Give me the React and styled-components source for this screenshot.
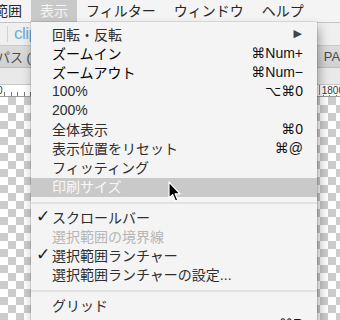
import styled, { createGlobalStyle } from "styled-components";

const Global = createGlobalStyle`
html, body {
  margin: 0;
  padding: 0;
  background: #fff;
}
body {
  font-family: "Liberation Sans", "Noto Sans CJK JP", "DejaVu Sans", sans-serif;
}
`

const Screen = styled.div`
position: relative;
width: 340px;
height: 320px;
overflow: hidden;
display: flex;
flex-direction: column;
background: #fff;
`

const MenuBar = styled.div`
height: 22px;
flex: none;
display: flex;
align-items: stretch;
background: #f4f4f4;
border-bottom: 1px solid #c4c4c4;
font-size: 14px;
color: #262626;
`

const BarItem = styled.div`
display: flex;
align-items: center;
padding: 0 9px 2px;
white-space: nowrap;
background: ${p => p.active ? "#c9c9c9" : "transparent"};
color: ${p => p.active ? "#f4f4f4" : "#262626"};
margin-left: ${p => p.first ? "-43px" : "0"};
`

const Toolbar = styled.div`
height: 22px;
flex: none;
display: flex;
align-items: center;
background: #efefef;
border-bottom: 1px solid #c9c9c9;
`

const Divider = styled.div`
width: 1px;
height: 16px;
margin-left: 7px;
background: #d2d2d2;
`

const ClipLabel = styled.span`
margin-left: 6px;
font-family: "Liberation Sans", sans-serif;
font-size: 17px;
color: #6aaee6;
letter-spacing: -0.5px;
`

const TabBar = styled.div`
height: 21px;
flex: none;
display: flex;
align-items: center;
justify-content: space-between;
background: linear-gradient(#dcdcdc, #d0d0d0);
border-bottom: 1px solid #bdbdbd;
font-size: 13px;
color: #4a4a4a;
white-space: nowrap;
`

const TabText = styled.span`
margin-left: ${p => p.shiftL || "0"};
margin-right: ${p => p.shiftR || "0"};
`

const SubBar = styled.div`
height: 16px;
flex: none;
background: #e9e9e9;
border-bottom: 1px solid #c8c8c8;
`

const Ruler = styled.div`
height: 11px;
flex: none;
display: flex;
justify-content: space-between;
background:
  repeating-linear-gradient(90deg, #777 0 1px, transparent 1px 6.5px) 4px 100% / 100% 4px no-repeat,
  #fff;
border-bottom: 1px solid #9a9a9a;
font-size: 10px;
line-height: 11px;
color: #333;
`

const RulerNum = styled.span`
background: #fff;
padding: 0 ${p => p.boxed ? "2px" : "0"};
border-left: ${p => p.boxed ? "1px solid #888" : "none"};
margin-left: ${p => p.boxed ? "0" : "-3px"};
margin-right: ${p => p.boxed ? "-6px" : "0"};
height: 10px;
`

const Canvas = styled.div`
flex: 1;
background-color: #fff;
background-image:
  linear-gradient(45deg, #cccccc 25%, transparent 25%, transparent 75%, #cccccc 75%),
  linear-gradient(45deg, #cccccc 25%, transparent 25%, transparent 75%, #cccccc 75%);
background-size: 16px 16px;
background-position: 0 0, 8px 8px;
`

const Dropdown = styled.div`
position: absolute;
top: 22px;
left: 31px;
width: 286px;
padding-top: 4px;
background: #f4f4f4;
box-shadow: 0 0 0 0.5px rgba(0,0,0,0.18), 2px 6px 10px rgba(0,0,0,0.35);
font-size: 14px;
`

const Row = styled.div`
box-sizing: border-box;
height: 19px;
display: flex;
align-items: center;
padding: 0 14px 4px 21px;
position: relative;
background: ${p => p.hot ? "#c9c9c9" : "transparent"};
color: ${p => p.hot ? "#f8f8f8" : p.off ? "#b6b6b6" : p.strong ? "#000" : "#2e2e2e"};
white-space: nowrap;
`

const Label = styled.span`
flex: 1;
`

const Keys = styled.span`
font-family: "Liberation Sans", "DejaVu Sans", "Noto Sans CJK JP", sans-serif;
color: #111;
`

const Arrow = styled.span`
font-family: "DejaVu Sans", sans-serif;
font-size: 11px;
color: #444;
margin-right: 1px;
`

const Check = styled.span`
position: absolute;
left: 5px;
top: -2px;
line-height: 19px;
font-family: "DejaVu Sans", sans-serif;
font-weight: 700;
font-size: 17px;
color: #222;
`

const Sep = styled.div`
height: 12px;
display: flex;
align-items: center;
&::after {
  content: "";
  flex: 1;
  height: 2px;
  background: #e2e2e2;
}
`

const Cursor = styled.svg`
position: absolute;
left: 168px;
top: 181px;
`

const items = [
  { t: "回転・反転", arrow: true },
  { t: "ズームイン", k: "⌘Num+", strong: true },
  { t: "ズームアウト", k: "⌘Num−", strong: true },
  { t: "100%", k: "⌥⌘0" },
  { t: "200%" },
  { t: "全体表示", k: "⌘0" },
  { t: "表示位置をリセット", k: "⌘@" },
  { t: "フィッティング" },
  { t: "印刷サイズ", hot: true },
  { sep: true },
  { t: "スクロールバー", check: true },
  { t: "選択範囲の境界線", off: true },
  { t: "選択範囲ランチャー", check: true },
  { t: "選択範囲ランチャーの設定..." },
  { sep: true },
  { t: "グリッド" },
  { t: "ルーラー", k: "⌘R" },
]

export default function App() {
  return <Screen>
    <Global />
    <MenuBar>
      <BarItem first>選択範囲</BarItem>
      <BarItem active>表示</BarItem>
      <BarItem>フィルター</BarItem>
      <BarItem>ウィンドウ</BarItem>
      <BarItem>ヘルプ</BarItem>
    </MenuBar>
    <Toolbar>
      <Divider />
      <ClipLabel>clip</ClipLabel>
    </Toolbar>
    <TabBar>
      <TabText shiftL="-3px">パス (A)</TabText>
      <TabText shiftR="-21px">PAINT</TabText>
    </TabBar>
    <SubBar />
    <Ruler>
      <RulerNum>0</RulerNum>
      <RulerNum boxed>1800</RulerNum>
    </Ruler>
    <Canvas />

    <Dropdown>
      {items.map((o, i) => o.sep
        ? <Sep key={i} />
        : <Row key={i} hot={o.hot} off={o.off} strong={o.strong}>
            {o.check && <Check>✓</Check>}
            <Label>{o.t}</Label>
            {o.k && <Keys>{o.k}</Keys>}
            {o.arrow && <Arrow>▶</Arrow>}
          </Row>)}
    </Dropdown>

    <Cursor width="14" height="22" viewBox="0 0 14 22">
      <path d="M1 1 L1 17 L4.6 13.6 L7.4 20 L9.8 19 L7.1 12.8 L12 12.8 Z"
        fill="#000" stroke="#fff" strokeWidth="1.2" strokeLinejoin="round" />
    </Cursor>
  </Screen>
}
